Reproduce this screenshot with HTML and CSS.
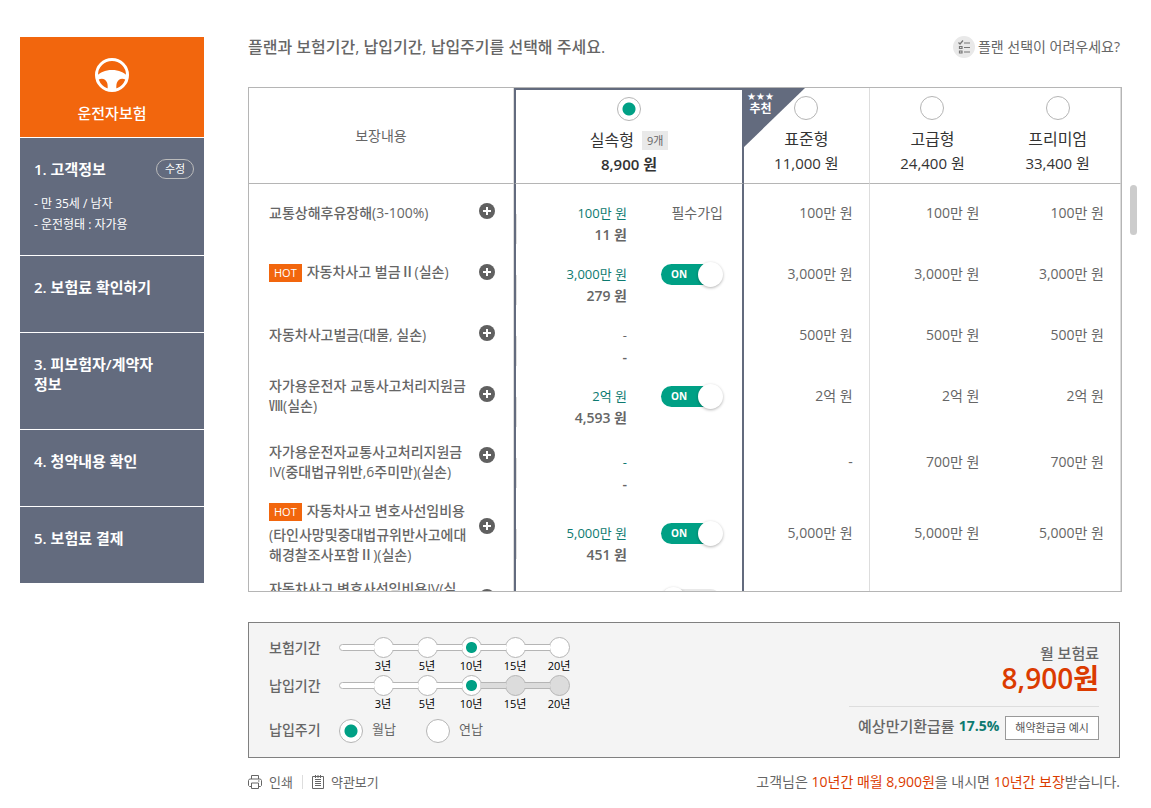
FILE: index.html
```html
<!DOCTYPE html>
<html lang="ko">

<head>
    <meta charset="UTF-8">
    <meta name="viewport" content="width=device-width, initial-scale=1.0">
    <title>운전자보험</title>
    <link rel="stylesheet" href="styles.css">
</head>

<body>
    <div class="page">
        <aside class="sidebar">
            <div class="product">
                <svg width="36" height="36" viewBox="0 0 36 36" aria-hidden="true">
                    <circle cx="18" cy="18" r="15.500" fill="none" stroke="#fff" stroke-width="3" />
                    <path fill="#fff" fill-rule="evenodd" d="M3 18.500C6 15.500 11 13 18 13s12 2.500 15 5.500L32 23c-4-2.500-7.500-1-9 2.500-.8 2-.8 4.500-.5 7.500h-9c.3-3 .3-5.500-.5-7.500C11.500 22 8 20.500 4 23z" />
                </svg>
                <strong>운전자보험</strong>
            </div>
            <ol class="steps">
                <li>
                    <div class="step-head">
                        <h2>1. 고객정보</h2>
                        <button type="button" class="edit">수정</button>
                    </div>
                    <ul class="customer">
                        <li>- 만 35세 / 남자</li>
                        <li>- 운전형태 : 자가용</li>
                    </ul>
                </li>
                <li><h2>2. 보험료 확인하기</h2></li>
                <li><h2>3. 피보험자/계약자 정보</h2></li>
                <li><h2>4. 청약내용 확인</h2></li>
                <li><h2>5. 보험료 결제</h2></li>
            </ol>
        </aside>

        <main class="main">
            <div class="title-row">
                <h1>플랜과 보험기간, 납입기간, 납입주기를 선택해 주세요.</h1>
                <a href="#" class="help">
                    <svg width="22" height="22" viewBox="0 0 22 22" aria-hidden="true">
                        <circle cx="11" cy="11" r="11" fill="#e9e9e9" />
                        <path d="M5.500 6.500l1.500 1.500 3-3.500M11 7h6M11 11.500h6M11 16h6M6.500 10.500h2.500v2h-2.500zM6.500 15h2.500v2h-2.500z" fill="none" stroke="#777" stroke-width="1.200" />
                    </svg>
                    <span>플랜 선택이 어려우세요?</span>
                </a>
            </div>

            <div class="plan-wrap">
                <div class="plan-box">
                    <table class="plans">
                        <colgroup>
                            <col class="col-name">
                            <col class="col-more">
                            <col class="col-amount">
                            <col class="col-switch">
                            <col>
                            <col>
                            <col>
                        </colgroup>
                        <thead>
                            <tr>
                                <th colspan="2" class="cover">보장내용</th>
                                <th colspan="2" class="selected">
                                    <label>
                                        <input type="radio" name="plan" class="radio" checked>
                                        <span class="plan-name">실속형 <em>9개</em></span>
                                        <span class="plan-price">8,900 원</span>
                                    </label>
                                </th>
                                <th class="recommended">
                                    <svg class="corner" width="62" height="60" viewBox="0 0 62 60" aria-hidden="true">
                                        <path d="M0 0h62L0 60z" fill="#636b7e" />
                                    </svg>
                                    <span class="ribbon"><i>★★★</i>추천</span>
                                    <label>
                                        <input type="radio" name="plan" class="radio">
                                        <span class="plan-name">표준형</span>
                                        <span class="plan-price">11,000 원</span>
                                    </label>
                                </th>
                                <th>
                                    <label>
                                        <input type="radio" name="plan" class="radio">
                                        <span class="plan-name">고급형</span>
                                        <span class="plan-price">24,400 원</span>
                                    </label>
                                </th>
                                <th>
                                    <label>
                                        <input type="radio" name="plan" class="radio">
                                        <span class="plan-name">프리미엄</span>
                                        <span class="plan-price">33,400 원</span>
                                    </label>
                                </th>
                            </tr>
                        </thead>
                        <tbody>
                            <tr>
                                <td class="name">교통상해후유장해(3-100%)</td>
                                <td class="more"><button type="button" aria-label="상세보기"></button></td>
                                <td class="amount"><span>100만 원</span><b>11 원</b></td>
                                <td class="option">필수가입</td>
                                <td class="value first">100만 원</td>
                                <td class="value">100만 원</td>
                                <td class="value">100만 원</td>
                            </tr>
                            <tr>
                                <td class="name"><span class="hot">HOT</span>자동차사고 벌금Ⅱ(실손)</td>
                                <td class="more"><button type="button" aria-label="상세보기"></button></td>
                                <td class="amount"><span>3,000만 원</span><b>279 원</b></td>
                                <td class="option"><label class="switch"><input type="checkbox" checked><span>ON</span></label></td>
                                <td class="value first">3,000만 원</td>
                                <td class="value">3,000만 원</td>
                                <td class="value">3,000만 원</td>
                            </tr>
                            <tr>
                                <td class="name">자동차사고벌금(대물, 실손)</td>
                                <td class="more"><button type="button" aria-label="상세보기"></button></td>
                                <td class="amount none"><span>-</span><b>-</b></td>
                                <td class="option"></td>
                                <td class="value first">500만 원</td>
                                <td class="value">500만 원</td>
                                <td class="value">500만 원</td>
                            </tr>
                            <tr>
                                <td class="name">자가용운전자 교통사고처리지원금Ⅷ(실손)</td>
                                <td class="more"><button type="button" aria-label="상세보기"></button></td>
                                <td class="amount"><span>2억 원</span><b>4,593 원</b></td>
                                <td class="option"><label class="switch"><input type="checkbox" checked><span>ON</span></label></td>
                                <td class="value first">2억 원</td>
                                <td class="value">2억 원</td>
                                <td class="value">2억 원</td>
                            </tr>
                            <tr class="tall">
                                <td class="name">자가용운전자교통사고처리지원금IV(중대법규위반,6주미만)(실손)</td>
                                <td class="more"><button type="button" aria-label="상세보기"></button></td>
                                <td class="amount"><span>-</span><b>-</b></td>
                                <td class="option"></td>
                                <td class="value first">-</td>
                                <td class="value">700만 원</td>
                                <td class="value">700만 원</td>
                            </tr>
                            <tr class="tall">
                                <td class="name"><span class="hot">HOT</span>자동차사고 변호사선임비용(타인사망및중대법규위반사고에대해경찰조사포함Ⅱ)(실손)</td>
                                <td class="more"><button type="button" aria-label="상세보기"></button></td>
                                <td class="amount"><span>5,000만 원</span><b>451 원</b></td>
                                <td class="option"><label class="switch"><input type="checkbox" checked><span>ON</span></label></td>
                                <td class="value first">5,000만 원</td>
                                <td class="value">5,000만 원</td>
                                <td class="value">5,000만 원</td>
                            </tr>
                            <tr>
                                <td class="name">자동차사고 변호사선임비용IV(실손)</td>
                                <td class="more"><button type="button" aria-label="상세보기"></button></td>
                                <td class="amount"></td>
                                <td class="option"><label class="switch off"><input type="checkbox" aria-label="가입"></label></td>
                                <td class="value first"></td>
                                <td class="value"></td>
                                <td class="value"></td>
                            </tr>
                        </tbody>
                    </table>
                </div>
                <div class="scroll-thumb"></div>
            </div>

            <section class="summary">
                <div class="terms">
                    <div class="term" role="radiogroup" aria-labelledby="term-ins">
                        <span class="term-label" id="term-ins">보험기간</span>
                        <div class="stops">
                            <label><input type="radio" name="ins"><span>3년</span></label>
                            <label><input type="radio" name="ins"><span>5년</span></label>
                            <label><input type="radio" name="ins" checked><span>10년</span></label>
                            <label><input type="radio" name="ins"><span>15년</span></label>
                            <label><input type="radio" name="ins"><span>20년</span></label>
                        </div>
                    </div>
                    <div class="term" role="radiogroup" aria-labelledby="term-pay">
                        <span class="term-label" id="term-pay">납입기간</span>
                        <div class="stops">
                            <label><input type="radio" name="pay"><span>3년</span></label>
                            <label><input type="radio" name="pay"><span>5년</span></label>
                            <label><input type="radio" name="pay" checked><span>10년</span></label>
                            <label class="disabled"><input type="radio" name="pay" disabled><span>15년</span></label>
                            <label class="disabled"><input type="radio" name="pay" disabled><span>20년</span></label>
                        </div>
                    </div>
                    <div class="term cycle" role="radiogroup" aria-labelledby="term-cycle">
                        <span class="term-label" id="term-cycle">납입주기</span>
                        <label><input type="radio" name="cycle" class="radio" checked>월납</label>
                        <label><input type="radio" name="cycle" class="radio">연납</label>
                    </div>
                </div>
                <div class="total">
                    <span class="total-label">월 보험료</span>
                    <strong class="total-price">8,900원</strong>
                    <div class="refund">
                        <span>예상만기환급률</span>
                        <b>17.5%</b>
                        <button type="button">해약환급금 예시</button>
                    </div>
                </div>
            </section>

            <div class="bottom">
                <div class="tools">
                    <a href="#">
                        <svg width="14" height="14" viewBox="0 0 14 14" fill="none" stroke="#666" aria-hidden="true">
                            <path d="M3.500 4V.500h7V4M3 11.500H1.500l-1-1v-5l1-1.500h11l1 1.500v5l-1 1H11M3.500 8h7v5.500h-7zM10 6h1.500" />
                        </svg>
                        <span>인쇄</span>
                    </a>
                    <a href="#">
                        <svg width="12" height="14" viewBox="0 0 12 14" fill="none" stroke="#666" aria-hidden="true">
                            <path d="M.500 1.500h11v12H.500zM3 4.500h6M3 6.500h6M3 8.500h6M3 10.500h6M3.500 0v3M6 0v3M8.500 0v3" />
                        </svg>
                        <span>약관보기</span>
                    </a>
                </div>
                <p class="notice">고객님은 <em>10년간 매월 8,900원</em>을 내시면 <em>10년간 보장</em>받습니다.</p>
            </div>
        </main>
    </div>
</body>

</html>
```
FILE: styles.css
```css
*,
*::before {
    box-sizing: border-box;
}

body {
    margin: 0;
    background: #fff;
    color: #666;
    font-family: "Open Sans", "Noto Sans CJK KR", sans-serif;
    font-size: 14px;
    line-height: 20px;
}

h1,
h2,
p,
ol,
ul {
    margin: 0;
    padding: 0;
    list-style: none;
}

a {
    color: inherit;
    text-decoration: none;
}

em,
i {
    font-style: normal;
}

button {
    font-family: inherit;
    cursor: pointer;
}

svg {
    flex: none;
}

.page {
    display: flex;
    align-items: flex-start;
    gap: 44px;
    padding: 37px 31px 0 20px;
}

/* sidebar */
.sidebar {
    flex: none;
    width: 184px;
    color: #fff;
}

.product {
    display: flex;
    flex-direction: column;
    align-items: center;
    gap: 10px;
    height: 100px;
    padding-top: 20px;
    background: #f2660d;
}

.product strong {
    font-size: 15px;
    font-weight: 500;
}

.steps > li {
    margin-top: 1px;
    padding: 21px 14px 35px;
    background: #636b7e;
}

.steps > li:first-child {
    padding-bottom: 20px;
}

.steps h2 {
    max-width: 130px;
    font-size: 15px;
    font-weight: 600;
    line-height: 20px;
}

.step-head {
    display: flex;
    justify-content: space-between;
    margin-right: -4px;
}

.edit {
    width: 38px;
    height: 20px;
    padding: 0;
    border: 1px solid #bbb;
    border-radius: 10px;
    background: none;
    color: #fff;
    font-size: 11px;
    line-height: 16px;
}

.customer {
    margin-top: 14px;
    font-size: 12px;
    line-height: 21px;
}

/* heading */
.main {
    flex: 1;
    min-width: 0;
}

.title-row {
    display: flex;
    justify-content: space-between;
    align-items: center;
    height: 20px;
    margin-bottom: 30px;
}

h1 {
    font-size: 16px;
    font-weight: 500;
}

.help {
    display: flex;
    align-items: center;
    gap: 3px;
}

/* plan table */
.plan-wrap {
    position: relative;
    margin-right: -2px;
}

.plan-box {
    height: 505px;
    overflow: hidden;
    border: 1px solid #b5b5b5;
}

.scroll-thumb {
    position: absolute;
    top: 98px;
    right: -15px;
    width: 7px;
    height: 50px;
    border-radius: 4px;
    background: #ccc;
}

.plans {
    width: 100%;
    table-layout: fixed;
    border-collapse: separate;
    border-spacing: 0;
}

.col-name {
    width: 225px;
}

.col-more {
    width: 40px;
}

.col-amount {
    width: 130px;
}

.col-switch {
    width: 100px;
}

.plans th {
    position: relative;
    height: 96px;
    padding: 8px 0 0;
    border-bottom: 1px solid #b5b5b5;
    color: #333;
    font-weight: 400;
    vertical-align: top;
}

.plans th.cover {
    padding: 0;
    border-right: 1px solid #ddd;
    color: #666;
    vertical-align: middle;
}

.plans th.selected {
    padding-top: 7px;
    border-top: 2px solid #636b7e;
    border-left: 2px solid #636b7e;
    border-right: 2px solid #636b7e;
}

.plans th label {
    display: flex;
    flex-direction: column;
    align-items: center;
    line-height: 24px;
}

.plan-name {
    display: flex;
    align-items: center;
    gap: 8px;
    margin-top: 7px;
    font-size: 16px;
}

.plan-name em {
    padding: 0 5px;
    background: #e9e9e9;
    color: #666;
    font-size: 11px;
    line-height: 19px;
}

.plan-price {
    font-size: 15px;
}

.selected .plan-price {
    font-weight: 600;
}

.radio {
    width: 24px;
    height: 24px;
    margin: 0;
    appearance: none;
    border: 1px solid #b5b5b5;
    border-radius: 50%;
    background: #fff;
}

.radio:checked {
    background: radial-gradient(circle, #00a085 6px, #fff 7px);
}

.corner {
    position: absolute;
    top: 0;
    left: -1px;
}

.ribbon {
    position: absolute;
    top: 4px;
    left: 3px;
    color: #fff;
    font-size: 12px;
    font-weight: 700;
    line-height: 14px;
}

.ribbon i {
    display: block;
    font-family: "DejaVu Sans", sans-serif;
    font-size: 10px;
    line-height: 10px;
}

.plans th:nth-child(3),
.plans td:nth-child(5) {
    border-right: 1px solid #ddd;
}

.plans th:last-child,
.plans td:last-child {
    border-right: 1px solid #ddd;
}

.plans td {
    height: 61px;
    padding: 0 0 3px;
    vertical-align: middle;
}

.plans .tall td {
    height: 71px;
}

.plans td.name {
    padding-left: 20px;
    padding-right: 5px;
    font-weight: 500;
}

.hot {
    display: inline-block;
    margin: 2px 5px 4px 0;
    padding: 0 5px;
    background: #f2660d;
    color: #fff;
    font-size: 11px;
    font-weight: 400;
    line-height: 18px;
    vertical-align: top;
}

.plans td.more {
    padding: 19px 0 0 5px;
    border-right: 1px solid #ddd;
    vertical-align: top;
}

.more button {
    display: block;
    width: 16px;
    height: 16px;
    padding: 0;
    border: 0;
    border-radius: 50%;
    background:
        linear-gradient(#fff, #fff) center / 8px 2px no-repeat,
        linear-gradient(#fff, #fff) center / 2px 8px no-repeat,
        #606060;
}

.plans td.amount {
    padding: 18px 17px 0 0;
    border-left: 2px solid #636b7e;
    background: linear-gradient(#ddd, #ddd) 0 30px / 1px 30px no-repeat;
    text-align: right;
    line-height: 21px;
}

.amount span,
.amount b {
    display: block;
}

.amount span {
    color: #0d7a70;
    font-size: 13px;
}

.amount b {
    font-weight: 600;
}

.amount.none span {
    color: #666;
}

.plans td.option {
    padding-right: 19px;
    border-right: 2px solid #636b7e;
    text-align: right;
}

.switch {
    display: inline-block;
    position: relative;
    width: 60px;
    height: 21px;
    margin-right: 2px;
    padding-left: 10px;
    border-radius: 11px;
    background: #00a085;
    color: #fff;
    font-size: 10px;
    font-weight: 700;
    line-height: 21px;
    text-align: left;
    vertical-align: middle;
}

.switch input {
    position: absolute;
    top: -2px;
    right: -2px;
    width: 25px;
    height: 25px;
    margin: 0;
    appearance: none;
    border-radius: 50%;
    background: #fff;
    box-shadow: 0 1px 3px rgba(0, 0, 0, 0.3);
}

.switch.off {
    background: #e9e9e9;
}

.switch.off input {
    right: auto;
    left: 0;
}

.plans td.value {
    padding-right: 16px;
    text-align: right;
}

/* summary */
.summary {
    display: flex;
    justify-content: space-between;
    margin-top: 30px;
    padding: 14px 20px;
    border: 1px solid #808080;
    background: #f4f4f4;
}

.term {
    display: flex;
}

.term-label {
    width: 70px;
    line-height: 21px;
    font-weight: 500;
}

.stops {
    display: flex;
    position: relative;
    padding-left: 22px;
}

/* groove behind the stops */
.stops::before {
    content: "";
    position: absolute;
    top: 7px;
    left: 0;
    right: 22px;
    height: 7px;
    border: 1px solid #b5b5b5;
    border-radius: 4px;
    background: #fff;
}

.stops label {
    display: flex;
    flex-direction: column;
    align-items: center;
    position: relative;
    width: 44px;
    padding-bottom: 2px;
    color: #000;
    font-size: 11px;
    line-height: 15px;
}

/* opens the ring where the groove runs into it */
.stops label::before {
    content: "";
    position: absolute;
    z-index: 1;
    top: 8px;
    left: -13px;
    width: 26px;
    height: 5px;
    background: #fff;
}

.stops label:first-child::before {
    left: -10px;
    width: 23px;
}

.stops input {
    position: relative;
    width: 21px;
    height: 21px;
    margin: 0;
    appearance: none;
    border: 1px solid #b5b5b5;
    border-radius: 50%;
    background: #fff;
}

.stops input:checked {
    background: radial-gradient(circle, #00a085 5px, #fff 6px);
}

.stops .disabled input,
.stops .disabled::before {
    background: #dcdcdc;
}

.cycle {
    align-items: flex-start;
    height: 24px;
    margin-top: 6px;
}

.cycle label {
    display: flex;
    align-items: flex-start;
    gap: 9px;
    margin-right: 30px;
    font-size: 13px;
}

.total {
    display: flex;
    flex-direction: column;
    align-items: flex-end;
    width: 250px;
    padding-top: 6px;
}

.total-label {
    font-size: 15px;
    font-weight: 500;
    line-height: 20px;
}

.total-price {
    color: #db3b00;
    font-size: 28px;
    font-weight: 600;
    line-height: 30px;
}

.refund {
    display: flex;
    align-items: flex-start;
    justify-content: flex-end;
    width: 100%;
    margin-top: 13px;
    padding-top: 9px;
    border-top: 1px solid #ddd;
    font-size: 15px;
    font-weight: 500;
}

.refund b {
    margin: 0 6px 0 4px;
    color: #0d7a70;
    font-size: 14px;
    font-weight: 700;
}

.refund button {
    height: 24px;
    padding: 0 9px;
    border: 1px solid #999;
    background: #fff;
    color: #555;
    font-size: 11px;
    line-height: 20px;
}

/* bottom line */
.bottom {
    display: flex;
    justify-content: space-between;
    margin-top: 14px;
}

.tools {
    display: flex;
    align-items: center;
    font-size: 13px;
}

.tools a {
    display: flex;
    align-items: center;
    gap: 7px;
}

.tools a + a {
    margin-left: 9px;
    padding-left: 9px;
    border-left: 1px solid #ddd;
    line-height: 14px;
}

.notice em {
    color: #db3b00;
}
```
